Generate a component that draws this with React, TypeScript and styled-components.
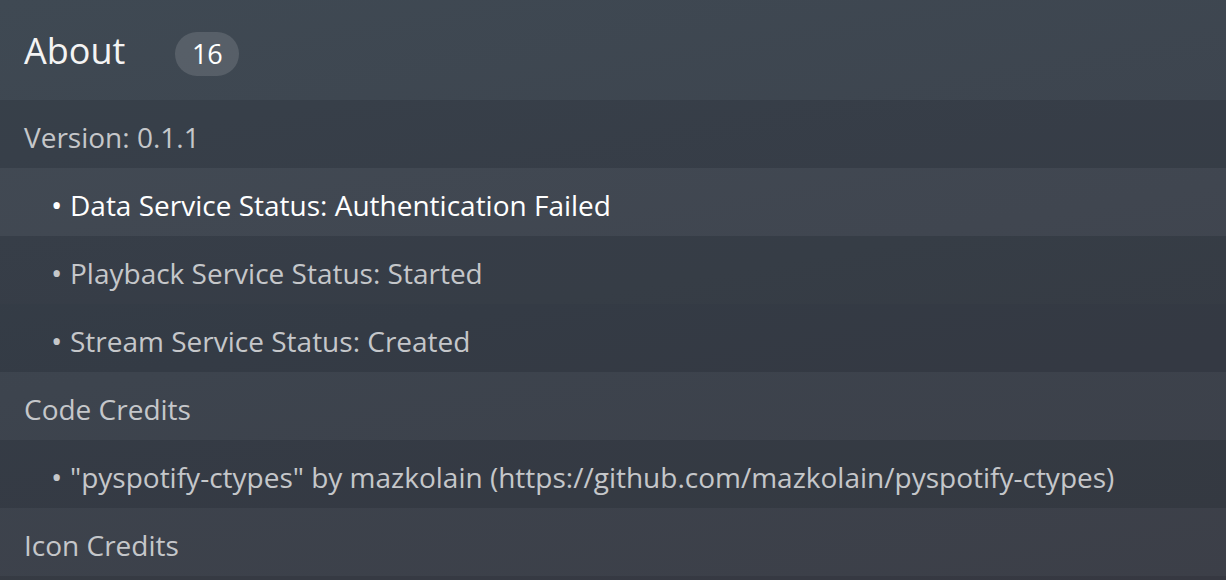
import React from "react";
import styled, { createGlobalStyle } from "styled-components";

const Global = createGlobalStyle`
  html, body { margin: 0; padding: 0; }
  body {
    width: 1226px;
    height: 580px;
    overflow: hidden;
    font-family: "Open Sans", "Noto Sans", sans-serif;
    background: linear-gradient(170deg, #3f4953 0%, #3d444e 50%, #3c3f48 100%);
  }
`;

const Page = styled.div`
  width: 1226px;
  height: 580px;
  overflow: hidden;
  display: flex;
  flex-direction: column;
`;

const Header = styled.div`
  height: 100px;
  flex: none;
  display: flex;
  align-items: center;
  padding: 0 0 0 24px;
  gap: 50px;
  box-sizing: border-box;
`;

const Title = styled.h1`
  margin: 0;
  font-size: 36px;
  font-weight: 400;
  color: #f4f4f4;
  line-height: 1;
  padding-top: 2px;
`;

const Badge = styled.span`
  display: inline-flex;
  align-items: center;
  justify-content: center;
  width: 64px;
  height: 44px;
  margin-top: 8px;
  border-radius: 22px;
  background: rgba(255, 255, 255, 0.13);
  color: #ffffff;
  font-size: 27px;
  line-height: 1;
  padding-bottom: 2px;
  box-sizing: border-box;
`;

const List = styled.div`
  display: flex;
  flex-direction: column;
`;

const Row = styled.div<{ $bg: string; $indent?: boolean; $bright?: boolean }>`
  height: 68px;
  flex: none;
  box-sizing: border-box;
  display: flex;
  align-items: center;
  padding: 6px 0 0 ${(p) => (p.$indent ? "51px" : "24px")};
  background: ${(p) => p.$bg};
  color: ${(p) => (p.$bright ? "#ffffff" : "#c5c7ca")};
  font-size: 28px;
  white-space: nowrap;
`;

const Bullet = styled.span`
  display: inline-block;
  width: 19px;
  font-size: 30px;
  line-height: 1;
`;

type Item = { text: string; bg: string; sub?: boolean; bright?: boolean };

const items: Item[] = [
  { text: "Version: 0.1.1", bg: "rgba(20,26,34,0.16)" },
  { text: "Data Service Status: Authentication Failed", bg: "rgba(255,255,255,0.015)", sub: true, bright: true },
  { text: "Playback Service Status: Started", bg: "rgba(20,26,34,0.16)", sub: true },
  { text: "Stream Service Status: Created", bg: "rgba(20,26,34,0.2)", sub: true },
  { text: "Code Credits", bg: "rgba(255,255,255,0.0)" },
  { text: "\"pyspotify-ctypes\" by mazkolain (https://github.com/mazkolain/pyspotify-ctypes)", bg: "rgba(20,22,28,0.17)", sub: true },
  { text: "Icon Credits", bg: "rgba(255,255,255,0.0)" },
  { text: "", bg: "rgba(20,22,28,0.15)" },
];

export default function App() {
  return (
    <Page>
      <Global />
      <Header>
        <Title>About</Title>
        <Badge>16</Badge>
      </Header>
      <List>
        {items.map((it, i) => (
          <Row key={i} $bg={it.bg} $indent={it.sub} $bright={it.bright}>
            {it.sub && <Bullet>•</Bullet>}
            {it.text}
          </Row>
        ))}
      </List>
    </Page>
  );
}
